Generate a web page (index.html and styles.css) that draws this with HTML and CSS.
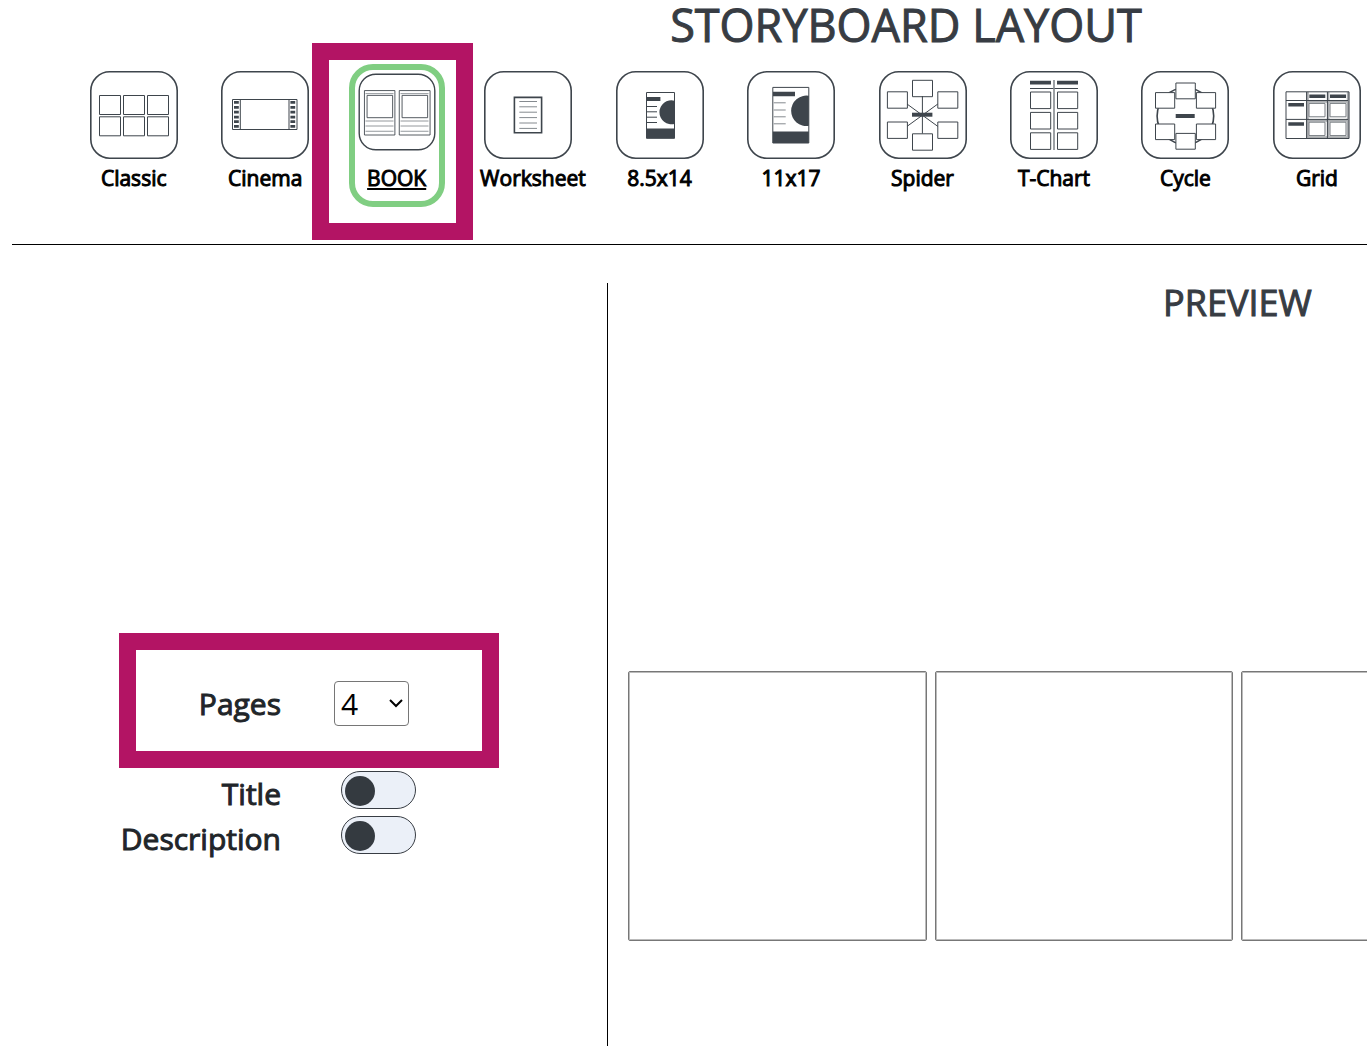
FILE: index.html
```html
<!DOCTYPE html>
<html lang="en">
<head>
  <meta charset="UTF-8" />
  <meta name="viewport" content="width=device-width, initial-scale=1.0"/>
  <title>Storyboard Layout</title>
  <link rel="stylesheet" href="styles.css">
</head>
<body>
  <main class="page">
    <h1>STORYBOARD LAYOUT</h1>

    <ul class="layouts">
      <li>
        <button class="tile" type="button">
          <svg viewBox="0 0 96 96"><rect class="frame" x="4.8" y="4.8" width="86.4" height="86.4" rx="19"/>
            <path d="M13.5 28.5h21v19h-21zM37.5 28.5h21v19h-21zM61.5 28.5h21v19h-21zM13.5 49.8h21v19h-21zM37.5 49.8h21v19h-21zM61.5 49.8h21v19h-21z"/>
          </svg>
          <span>Classic</span>
        </button>
      </li>
      <li>
        <button class="tile" type="button">
          <svg viewBox="0 0 96 96"><rect class="frame" x="4.8" y="4.8" width="86.4" height="86.4" rx="19"/>
            <path d="M15.5 32.5h64.5v30h-64.5zM23.3 32.5v30M72 32.5v30"/>
            <path class="solid" d="M17 34h4.8v2.8H17zM17 39h4.8v2.8H17zM17 43.7h4.8v2.8H17zM17 48.7h4.8v2.8H17zM17 53.3h4.8v2.8H17zM17 58h4.8v2.8H17zM73.4 34h4.8v2.8h-4.8zM73.4 39h4.8v2.8h-4.8zM73.4 43.7h4.8v2.8h-4.8zM73.4 48.7h4.8v2.8h-4.8zM73.4 53.3h4.8v2.8h-4.8zM73.4 58h4.8v2.8h-4.8z"/>
          </svg>
          <span>Cinema</span>
        </button>
      </li>
      <li class="marked">
        <button class="tile selected" type="button" aria-pressed="true">
          <svg viewBox="0 0 96 96"><rect class="frame" x="4.8" y="4.8" width="86.4" height="86.4" rx="19"/>
            <path d="M10.8 23.5h34.8v50.8H10.8zM50.6 23.5h35.2v50.8H50.6zM13.8 29h29.2v25.5H13.8zM53.8 29H83v25.5H53.8z"/>
            <path class="light" d="M12 27h32M52 27h32M12 58.3h32M12 64h32M12 70h32M52 58.3h32M52 64h32M52 70h32"/>
          </svg>
          <span>BOOK</span>
        </button>
      </li>
      <li>
        <button class="tile" type="button">
          <svg viewBox="0 0 96 96"><rect class="frame" x="4.8" y="4.8" width="86.4" height="86.4" rx="19"/>
            <path class="thick" d="M34.4 30.4h27.2v35.4H34.4z"/>
            <path class="light" d="M39.3 34.5H57M39.3 39.8H57M39.3 45.2H57M39.3 50.6H57M39.3 56H57M39.3 61.4H57"/>
          </svg>
          <span>Worksheet</span>
        </button>
      </li>
      <li>
        <button class="tile" type="button">
          <svg viewBox="0 0 96 96"><rect class="frame" x="4.8" y="4.8" width="86.4" height="86.4" rx="19"/>
            <path d="M34.5 25.5h28v45.8h-28z"/>
            <path class="solid" d="M35 30h13.4v4H35zM34.5 61.5h28v9.8h-28zM62.5 33.7a12 12 0 1 0 0 23.2z"/>
            <path d="M35 39.5h10M35 44.8h10M35 50.2h10M35 55.5h10"/>
          </svg>
          <span>8.5x14</span>
        </button>
      </li>
      <li>
        <button class="tile" type="button">
          <svg viewBox="0 0 96 96"><rect class="frame" x="4.8" y="4.8" width="86.4" height="86.4" rx="19"/>
            <path d="M29.8 20.4h36V76h-36z"/>
            <path class="solid" d="M30 24.7h22v4.6H30zM29.8 64.5h36V76h-36zM65.8 28.8a15.2 15.2 0 1 0 0 30z"/>
            <path class="light" d="M30.7 35.8h12M30.7 43h12M30.7 49.8h12M30.7 56.8h12"/>
          </svg>
          <span>11x17</span>
        </button>
      </li>
      <li>
        <button class="tile" type="button">
          <svg viewBox="0 0 96 96"><rect class="frame" x="4.8" y="4.8" width="86.4" height="86.4" rx="19"/>
            <path d="M47.4 29v37.5M32 37l30.8 22.4M62.8 37L32 59.4"/>
            <path d="M37.5 13.3h20v16.4h-20zM37.5 66.8h20v16.4h-20zM12.4 24.8h20v16.4h-20zM12.4 55h20v16.4h-20zM62.8 24.8h20v16.4h-20zM62.8 55h20v16.4h-20z"/>
            <path class="solid" d="M37 45.7h20.4v4H37z"/>
          </svg>
          <span>Spider</span>
        </button>
      </li>
      <li>
        <button class="tile" type="button">
          <svg viewBox="0 0 96 96"><rect class="frame" x="4.8" y="4.8" width="86.4" height="86.4" rx="19"/>
            <path d="M24 21.5h48M24.5 25h20.2v16.6H24.5zM51.5 25h20.2v16.6H51.5zM24.5 45.4h20.2V62H24.5zM51.5 45.4h20.2V62H51.5zM24.5 65.8h20.2v16.6H24.5zM51.5 65.8h20.2v16.6H51.5z"/>
            <path class="light wide" d="M48 13v70"/>
            <path class="solid" d="M24 13.7h21v3.8H24zM51 13.7h21v3.8H51z"/>
          </svg>
          <span>T-Chart</span>
        </button>
      </li>
      <li>
        <button class="tile" type="button">
          <svg viewBox="0 0 96 96"><rect class="frame" x="4.8" y="4.8" width="86.4" height="86.4" rx="19"/>
            <circle class="thick" cx="48.4" cy="49" r="28.3"/>
            <path class="card" d="M18.5 25.6h19.2v15.6H18.5zM59.4 25.6h19.2v15.6H59.4zM18.5 57h19.2v15.6H18.5zM59.4 57h19.2v15.6H59.4zM38.9 16h19.4v15.8H38.9zM38.9 66.4h19.4v15.8H38.9z"/>
            <path class="solid" d="M38.7 47h19v4h-19z"/>
          </svg>
          <span>Cycle</span>
        </button>
      </li>
      <li>
        <button class="tile" type="button">
          <svg viewBox="0 0 96 96"><rect class="frame" x="4.8" y="4.8" width="86.4" height="86.4" rx="19"/>
            <path class="pale" d="M38.6 25v46.5M59.2 25v46.5M79 25v46.5M38 34.6h41M38 53.6h41M38 70.4h41"/>
            <path d="M17 24.8h63v46.7H17zM37.6 25v46.5M58.4 25v46.5M17 33.5h62M17 52.4h62"/>
            <path class="card soft" d="M40 36.4h16v13.4H40zM61 36.4h16v13.4H61zM40 55.2h16v13.4H40zM61 55.2h16v13.4H61z"/>
            <path class="solid" d="M40.3 27.4h16V31h-16zM61 27.4h16V31H61zM19.3 36H35v3.5H19.3zM19.3 55.2H35v3.5H19.3z"/>
          </svg>
          <span>Grid</span>
        </button>
      </li>
    </ul>

    <div class="workspace">
      <form class="options">
        <div class="option pages-option">
          <label for="pages">Pages</label>
          <div class="select-box">
            <select id="pages">
              <option>2</option>
              <option selected>4</option>
              <option>6</option>
              <option>8</option>
            </select>
            <svg viewBox="0 0 14 9"><path d="M1 1l6 6 6-6"/></svg>
          </div>
        </div>
        <div class="option">
          <label for="title">Title</label>
          <input class="toggle" type="checkbox" id="title">
        </div>
        <div class="option">
          <label for="description">Description</label>
          <input class="toggle" type="checkbox" id="description">
        </div>
      </form>

      <section class="preview">
        <h2>PREVIEW</h2>
        <div class="sheets">
          <div class="sheet"></div>
          <div class="sheet"></div>
          <div class="sheet"></div>
          <div class="sheet"></div>
        </div>
      </section>
    </div>
  </main>
</body>
</html>
```
FILE: styles.css
```css
:root {
  --ink: #373c43;
  --icon: #3e454c;
  --accent: #b31464;
  --selected: #80ce82;
}

* {
  box-sizing: border-box;
}

body {
  margin: 0;
  font-family: 'Open Sans', sans-serif;
  background-color: #fff;
  color: #212529;
  overflow: hidden;
}

/* the dialog is wider than the window and runs off to the right */
.page {
  width: 130.8%;
  margin-left: 12px;
}

h1,
h2 {
  margin: 0;
  font-weight: 400;
  color: var(--ink);
  text-align: center;
}

/* thicken the regular weight without changing its widths */
h1,
h2,
.tile span,
.option label {
  -webkit-text-stroke: 1px currentColor;
}

h1 {
  font-size: 45px;
  line-height: 50px;
}

h2 {
  font-size: 36px;
  line-height: 40px;
}

/* layout picker */
.layouts {
  display: grid;
  grid-template-columns: repeat(13, 1fr);
  list-style: none;
  margin: 0;
  padding: 14px 23px 37px 56px;
  border-bottom: 1px solid #000;
}

.layouts li {
  display: flex;
  justify-content: center;
  position: relative;
}

.tile {
  display: grid;
  grid-template-columns: 100%;
  grid-template-rows: 97px auto;
  align-content: start;
  width: 96px;
  height: 143px;
  padding: 3px 0 0;
  border: 0;
  background: none;
  color: #000;
  font: 400 21px/28px 'Open Sans', sans-serif;
  white-space: nowrap;
  cursor: pointer;
}

.tile.selected {
  grid-template-rows: 94px auto;
  padding: 0;
  border: 6px solid var(--selected);
  border-radius: 24px;
  text-decoration: underline;
}

.tile svg {
  width: 100%;
  fill: none;
  stroke: var(--icon);
  stroke-width: 1;
}

.tile .frame,
.tile .thick,
.tile .wide {
  stroke-width: 1.6;
}

.tile .light {
  stroke: #858a8f;
}

.tile .pale {
  stroke: #a9acaf;
  stroke-width: 2.4;
}

.tile .solid {
  fill: var(--icon);
  stroke: none;
}

.tile .card {
  fill: #fff;
}

.tile .soft {
  stroke: #767b80;
}

/* callout frames */
.marked::after,
.pages-option::after {
  content: '';
  position: absolute;
  border: 17px solid var(--accent);
  pointer-events: none;
}

.marked::after {
  inset: -21px -11px -33px -19px;
}

.pages-option::after {
  inset: -48px 108px -42px 107px;
}

/* options and preview */
.workspace {
  display: grid;
  grid-template-columns: 33.3% 1fr;
  min-height: calc(100vh - 283px);
  margin-top: 38px;
}

.options {
  padding-top: 398px;
}

.option {
  display: grid;
  grid-template-columns: 269px auto;
  justify-content: start;
  column-gap: 60px;
  height: 45px;
  position: relative;
}

.pages-option {
  column-gap: 53px;
  margin-bottom: 45px;
}

.option label {
  font-size: 30px;
  line-height: 45px;
  text-align: right;
}

.select-box {
  position: relative;
}

.select-box select {
  appearance: none;
  width: 75px;
  height: 45px;
  padding: 0 6px;
  border: 1px solid #767676;
  border-radius: 4px;
  background-color: #fff;
  color: #000;
  font: 400 30px 'Open Sans', sans-serif;
}

.select-box svg {
  position: absolute;
  top: 18px;
  right: 6px;
  width: 14px;
  fill: none;
  stroke: #000;
  stroke-width: 2;
  pointer-events: none;
}

.toggle {
  appearance: none;
  display: flex;
  align-items: center;
  width: 75px;
  height: 38px;
  margin: 0;
  padding: 2px 3px 0;
  border: 1px solid var(--ink);
  border-radius: 19px;
  background-color: #ebf0f8;
}

.toggle::before {
  content: '';
  width: 30px;
  height: 30px;
  border-radius: 50%;
  background-color: #343a40;
}

.toggle:checked {
  justify-content: flex-end;
}

.preview {
  padding-left: 20px;
  border-left: 1px solid #000;
}

.preview h2,
.sheets {
  width: 1218px;
}

.sheets {
  display: flex;
  gap: 8px;
  margin-top: 348px;
}

.sheet {
  flex: 1;
  height: 270px;
  border: 1px solid #777;
  border-radius: 2px;
  box-shadow: inset 0 0 0 1px #bbb;
}
```
